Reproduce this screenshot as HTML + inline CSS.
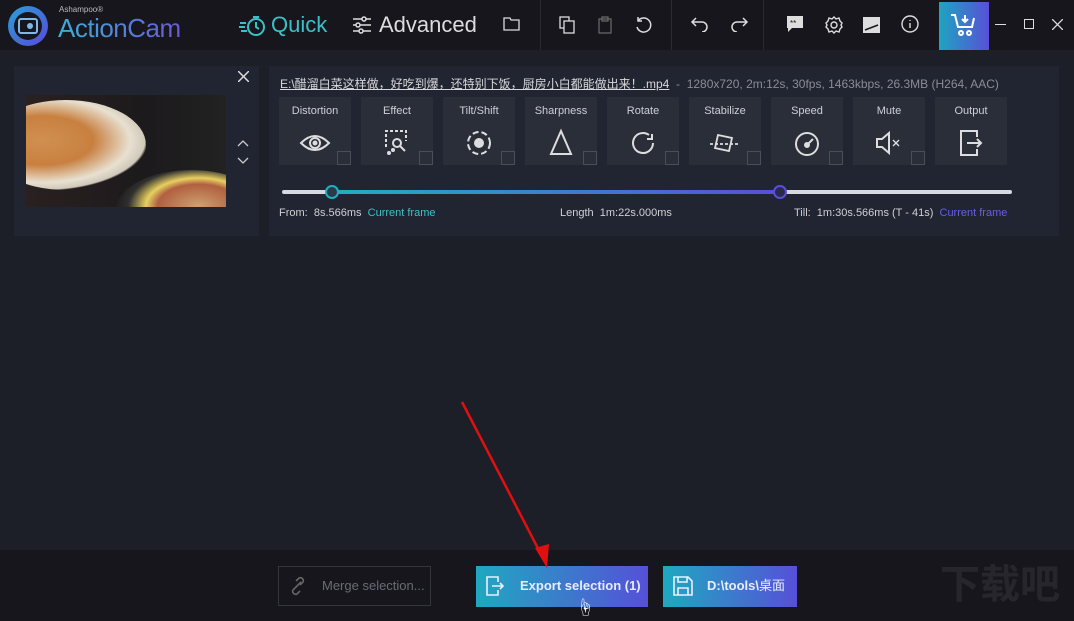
<!DOCTYPE html>
<html><head><meta charset="utf-8"><style>
*{margin:0;padding:0;box-sizing:border-box}
body{width:1074px;height:621px;overflow:hidden;background:#1c1f28;font-family:"Liberation Sans","Noto Sans CJK SC",sans-serif;position:relative;color:#d8d8dc}
.abs{position:absolute;line-height:1.15}
#top{left:0;top:0;width:1074px;height:50px;background:#16161c}
#bot{left:0;top:550px;width:1074px;height:71px;background:#16161c}
.tile{position:absolute;top:97px;width:72px;height:68px;background:#2a2e39}
.tile .l{position:absolute;top:8px;width:100%;text-align:center;font-size:11px;color:#cfd0d6}
.tile svg{position:absolute;left:20px;top:30px}
.tile .cb{position:absolute;right:0;bottom:0;width:14px;height:14px;border:1px solid #4a4e59}
</style></head><body>
<div id="top" class="abs"></div>
<svg class="abs" style="left:6px;top:4px" width="46" height="44"><defs><linearGradient id="lg" x1="0" y1="0" x2="1" y2="1"><stop offset="0" stop-color="#2a9fd8"/><stop offset="1" stop-color="#5a48d8"/></linearGradient></defs><circle cx="22" cy="22" r="20" fill="url(#lg)"/><circle cx="22" cy="22" r="14" fill="#16161c"/><rect x="13" y="15" width="18" height="14" rx="2" fill="none" stroke="#7fb8e8" stroke-width="2"/><circle cx="24" cy="22" r="3" fill="#7fb8e8"/></svg>
<div class="abs" style="left:59px;top:5px;font-size:8px;color:#bbb">Ashampoo®</div>
<div class="abs" style="left:58px;top:14px;font-size:26px;letter-spacing:-0.5px;background:linear-gradient(90deg,#3ab0d8,#6a58d8);-webkit-background-clip:text;color:transparent">ActionCam</div>
<svg class="abs" style="left:238px;top:14px" width="30" height="24" fill="none" stroke="#3cc0c8" stroke-width="2"><circle cx="18" cy="13" r="8"/><path d="M18 8v5l3 2M15 3h6M2 9h6M1 13h6M3 17h6"/></svg>
<div class="abs" style="left:271px;top:12px;font-size:22px;color:#3cc0c8">Quick</div>
<svg class="abs" style="left:352px;top:16px" width="20" height="18" stroke="#ddd" stroke-width="1.5" fill="#16161c"><path d="M1 3h18M1 9h18M1 15h18"/><circle cx="12" cy="3" r="2"/><circle cx="6" cy="9" r="2"/><circle cx="9" cy="15" r="2"/></svg>
<div class="abs" style="left:379px;top:12px;font-size:22px;color:#ddd">Advanced</div>
<svg class="abs" style="left:503px;top:17px" width="17" height="14" fill="none" stroke="#ddd" stroke-width="1.3"><path d="M1 1h6l1 2h8v10H1z"/></svg>
<div class="abs" style="left:540px;top:0;width:1px;height:50px;background:#2a2a32"></div>
<svg class="abs" style="left:559px;top:16px" width="17" height="18" fill="none" stroke="#ddd" stroke-width="1.3"><rect x="1" y="1" width="9" height="11"/><rect x="5" y="5" width="10" height="12" fill="#16161c"/></svg>
<svg class="abs" style="left:598px;top:16px" width="14" height="18" fill="none" stroke="#666" stroke-width="1.3"><rect x="1" y="3" width="12" height="14"/><rect x="4" y="1" width="6" height="4"/></svg>
<svg class="abs" style="left:634px;top:15px" width="20" height="20" fill="none" stroke="#ddd" stroke-width="1.5"><path d="M4 6A7 7 0 1 1 3 12M4 2v4h4"/></svg>
<div class="abs" style="left:671px;top:0;width:1px;height:50px;background:#2a2a32"></div>
<svg class="abs" style="left:690px;top:16px" width="20" height="16" fill="none" stroke="#ddd" stroke-width="1.5"><path d="M6 2L2 6l4 4M2 6h10a5 5 0 0 1 0 10"/></svg>
<svg class="abs" style="left:729px;top:16px" width="20" height="16" fill="none" stroke="#ddd" stroke-width="1.5"><path d="M14 2l4 4-4 4M18 6H8a5 5 0 0 0 0 10"/></svg>
<div class="abs" style="left:763px;top:0;width:1px;height:50px;background:#2a2a32"></div>
<svg class="abs" style="left:786px;top:15px" width="18" height="19"><path d="M1 1h16v12H6l-4 4v-4H1z" fill="#ddd"/><text x="4" y="11" font-size="8" fill="#16161c">**</text></svg>
<svg class="abs" style="left:824px;top:15px" width="20" height="20" fill="none" stroke="#ddd" stroke-width="1.4"><circle cx="10" cy="10" r="3"/><path d="M10 2l2 2 3-1 1 3 2 2-1 2 1 2-2 2-1 3-3-1-2 2-2-2-3 1-1-3-2-2 1-2-1-2 2-2 1-3 3 1z"/></svg>
<svg class="abs" style="left:863px;top:17px" width="17" height="16"><rect width="17" height="16" fill="#ddd"/><path d="M2 13L15 8" stroke="#16161c" stroke-width="1.5"/></svg>
<svg class="abs" style="left:901px;top:15px" width="18" height="18" fill="none" stroke="#ddd" stroke-width="1.4"><circle cx="9" cy="9" r="8"/><path d="M9 8v5M9 5v1"/></svg>
<div class="abs" style="left:939px;top:2px;width:50px;height:48px;background:linear-gradient(90deg,#1fa4c0,#5850d8)"></div>
<svg class="abs" style="left:950px;top:13px" width="28" height="26" fill="none" stroke="#fff" stroke-width="2"><path d="M1 2h4l3 12h14l2-9"/><circle cx="11" cy="20" r="2"/><circle cx="19" cy="20" r="2"/><path d="M15 2v7M12 6l3 3 3-3"/></svg>
<div class="abs" style="left:995px;top:24px;width:11px;height:1px;background:#ddd"></div>
<div class="abs" style="left:1024px;top:19px;width:10px;height:10px;border:1px solid #ddd"></div>
<svg class="abs" style="left:1052px;top:19px" width="11" height="11" stroke="#ddd" stroke-width="1.3"><path d="M0 0l11 11M11 0L0 11"/></svg>

<div class="abs" style="left:14px;top:66px;width:245px;height:170px;background:#212531"></div>
<div class="abs" style="left:26px;top:95px;width:200px;height:112px;overflow:hidden;background:linear-gradient(90deg,#2a2020,#1c1a1c 60%,#222)">
<div style="position:absolute;left:-40px;top:5px;width:160px;height:90px;border-radius:50%;background:radial-gradient(ellipse at 35% 45%,#d09050 0,#c88040 35%,#e8e0d0 60%,#d0c8b8 70%,transparent 72%)"></div>
<div style="position:absolute;left:90px;top:75px;width:150px;height:80px;border-radius:50%;background:radial-gradient(ellipse at 55% 45%,#d0a070 0,#b06040 35%,#e8d060 45%,#303030 60%,transparent 72%)"></div>
</div>
<svg class="abs" style="left:238px;top:71px" width="11" height="11" stroke="#ddd" stroke-width="1.5"><path d="M0 0l11 11M11 0L0 11"/></svg>
<svg class="abs" style="left:236px;top:138px" width="14" height="30" fill="none" stroke="#ccc" stroke-width="1.3"><path d="M2 8l5-5 5 5M2 20l5 5 5-5"/></svg>

<div class="abs" style="left:269px;top:66px;width:790px;height:170px;background:#212531"></div>
<div class="abs" style="left:280px;top:78px;font-size:12px;color:#d8d8dc;white-space:nowrap"><span style="text-decoration:underline">E:\醋溜白菜这样做，好吃到爆，还特别下饭，厨房小白都能做出来！.mp4</span><span style="color:#8a8d96">&nbsp; -&nbsp; 1280x720, 2m:12s, 30fps, 1463kbps, 26.3MB (H264, AAC)</span></div>

<div class="tile" style="left:279px"><div class="l">Distortion</div><svg width="32" height="32" fill="none" stroke="#ddd" stroke-width="2"><path d="M2 16Q16 2 30 16Q16 30 2 16z"/><circle cx="16" cy="16" r="5"/><circle cx="16" cy="16" r="1.5" fill="#ddd"/></svg><div class="cb"></div></div>
<div class="tile" style="left:361px"><div class="l">Effect</div><svg width="32" height="32" fill="none" stroke="#ddd" stroke-width="2"><path d="M5 20V4h20v10" stroke-dasharray="3 2"/><circle cx="16" cy="16" r="4"/><path d="M19 19l5 5"/><circle cx="8" cy="26" r="1" fill="#ddd"/><circle cx="12" cy="23" r="1" fill="#ddd"/></svg><div class="cb"></div></div>
<div class="tile" style="left:443px"><div class="l">Tilt/Shift</div><svg width="32" height="32" fill="none" stroke="#ddd" stroke-width="2"><circle cx="16" cy="16" r="11" stroke-dasharray="6 3"/><circle cx="16" cy="16" r="4" fill="#ddd"/></svg><div class="cb"></div></div>
<div class="tile" style="left:525px"><div class="l">Sharpness</div><svg width="32" height="32" fill="none" stroke="#ddd" stroke-width="2"><path d="M16 4L26 27H6z"/></svg><div class="cb"></div></div>
<div class="tile" style="left:607px"><div class="l">Rotate</div><svg width="32" height="32" fill="none" stroke="#ddd" stroke-width="2"><path d="M26 16A10 10 0 1 1 22 8"/><path d="M23 4v5h-5" transform="translate(2 3)"/></svg><div class="cb"></div></div>
<div class="tile" style="left:689px"><div class="l">Stabilize</div><svg width="32" height="32" fill="none" stroke="#ddd" stroke-width="1.8"><path d="M9 8l14 3-3 13-14-3z"/><path d="M1 17h30" stroke-dasharray="3 2"/></svg><div class="cb"></div></div>
<div class="tile" style="left:771px"><div class="l">Speed</div><svg width="32" height="32" fill="none" stroke="#ddd" stroke-width="2"><circle cx="16" cy="17" r="11"/><path d="M16 18l6-6"/><circle cx="16" cy="18" r="2" fill="#ddd"/></svg><div class="cb"></div></div>
<div class="tile" style="left:853px"><div class="l">Mute</div><svg width="32" height="32" fill="none" stroke="#ddd" stroke-width="2"><path d="M4 12h5l7-6v20l-7-6H4z"/><path d="M20 13l6 6M26 13l-6 6" stroke-width="1.4"/></svg><div class="cb"></div></div>
<div class="tile" style="left:935px"><div class="l">Output</div><svg width="32" height="32" fill="none" stroke="#ddd" stroke-width="2"><path d="M22 10V4H6v24h16v-6M12 16h14M22 12l4 4-4 4"/></svg></div>

<div class="abs" style="left:282px;top:190px;width:50px;height:4px;border-radius:2px;background:#d8d8e0"></div>
<div class="abs" style="left:332px;top:190px;width:448px;height:4px;background:linear-gradient(90deg,#1fb0c0,#5a4ed8)"></div>
<div class="abs" style="left:780px;top:190px;width:232px;height:4px;border-radius:2px;background:#d8d8e0"></div>
<div class="abs" style="left:325px;top:185px;width:14px;height:14px;border-radius:50%;background:#2a3a48;border:2px solid #1fb0c0"></div>
<div class="abs" style="left:773px;top:185px;width:14px;height:14px;border-radius:50%;background:#2a2a48;border:2px solid #5a4ed8"></div>
<div class="abs" style="left:279px;top:207px;font-size:11px;color:#d0d0d6">From:&nbsp; 8s.566ms <span style="color:#3cc0c8">&nbsp;Current frame</span></div>
<div class="abs" style="left:560px;top:207px;font-size:11px;color:#d0d0d6">Length&nbsp; 1m:22s.000ms</div>
<div class="abs" style="left:794px;top:207px;font-size:11px;color:#d0d0d6">Till:&nbsp; 1m:30s.566ms (T - 41s) <span style="color:#6a5ee0">&nbsp;Current frame</span></div>

<div id="bot" class="abs"></div>
<div class="abs" style="left:278px;top:566px;width:153px;height:40px;border:1px solid #34363e"></div>
<svg class="abs" style="left:287px;top:576px" width="22" height="20" fill="none" stroke="#666" stroke-width="1.6"><path d="M9 11l-3 3a3 3 0 0 0 4 4l3-3M13 9l3-3a3 3 0 0 0-4-4l-3 3M8 12l6-6"/></svg>
<div class="abs" style="left:322px;top:579px;font-size:13px;color:#6a6c74">Merge selection...</div>
<div class="abs" style="left:476px;top:566px;width:172px;height:41px;background:linear-gradient(90deg,#1fa8c0,#5650d8)"></div>
<svg class="abs" style="left:486px;top:576px" width="20" height="20" fill="none" stroke="#e8f0ff" stroke-width="1.6"><path d="M12 6V1H1v18h11v-5M6 10h11M14 7l3 3-3 3"/></svg>
<div class="abs" style="left:520px;top:579px;font-size:13px;font-weight:bold;color:#e8ecff">Export selection (1)</div>
<div class="abs" style="left:663px;top:566px;width:134px;height:41px;background:linear-gradient(90deg,#1fa8c0,#5650d8)"></div>
<svg class="abs" style="left:673px;top:576px" width="20" height="20" fill="none" stroke="#e8f0ff" stroke-width="1.6"><path d="M1 1h14l4 4v14H1zM5 1v5h9V1M5 19v-7h10v7"/></svg>
<div class="abs" style="left:707px;top:578px;height:16px;line-height:16px;font-size:13px;font-weight:bold;color:#e8ecff;white-space:nowrap">D:\tools\<span style="font-weight:normal">桌面</span></div>
<svg class="abs" style="left:455px;top:398px" width="100" height="175"><path d="M7 4L88 160" stroke="#e01010" stroke-width="2.5"/><path d="M80 150l12 20 2-24z" fill="#e01010"/></svg>
<div class="abs" style="left:576px;top:598px;font-size:18px;color:#fff">☝</div>
<div class="abs" style="left:940px;top:562px;font-size:40px;color:#26262c;font-weight:bold">下载吧</div>
</body></html>
